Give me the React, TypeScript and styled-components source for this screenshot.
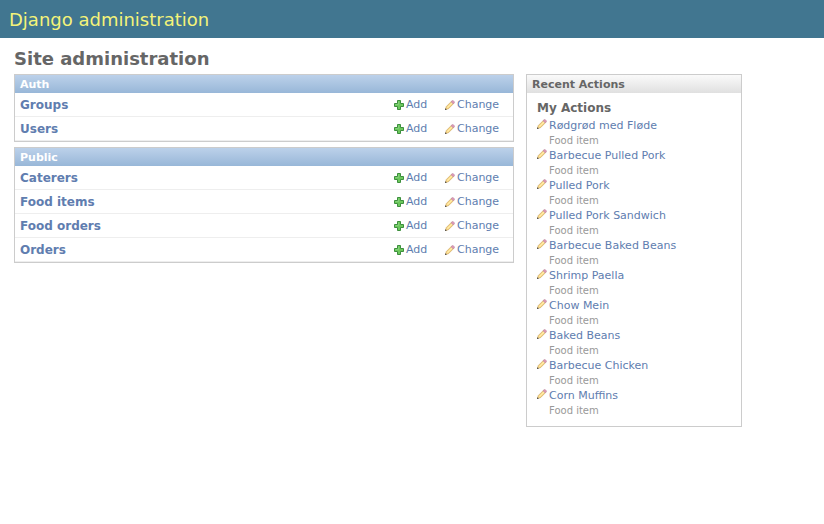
import React from "react";
import styled, { createGlobalStyle } from "styled-components";

const GlobalStyle = createGlobalStyle`
  * { box-sizing: border-box; }
  body {
    margin: 0;
    background: #fff;
    color: #666;
    font: 12px/16px Verdana, "DejaVu Sans", sans-serif;
  }
`;

const Header = styled.header`
  display: flex;
  align-items: center;
  min-height: 38px;
  padding: 2px 9px 0;
  background: #417690;
`;

const SiteName = styled.h1`
  margin: 0;
  color: #f4f379;
  font-size: 18px;
  line-height: 22px;
  font-weight: normal;
`;

const Content = styled.main`
  max-width: 756px;
  padding: 10px 14px;
`;

const PageTitle = styled.h2`
  margin: 0 0 4px;
  font-size: 18px;
  line-height: 22px;
  font-weight: bold;
`;

const Columns = styled.div`
  display: grid;
  grid-template-columns: minmax(0, 1fr) 216px;
  align-items: start;
  gap: 12px;
`;

const ModuleList = styled.div`
  display: flex;
  flex-direction: column;
  gap: 5px;
`;

const ModuleTable = styled.table`
  width: 100%;
  border: 1px solid #ccc;
  border-spacing: 0;
`;

const ModuleHead = styled.th`
  height: 18px;
  padding: 2px 5px 0;
  background: linear-gradient(#bcd1ea, #98b7d8);
  color: #fff;
  font-size: 11px;
  line-height: 16px;
  text-align: left;
`;

const Row = styled.tr`
  & > * {
    height: 24px;
    padding: 0 5px;
    border-bottom: 1px solid #eee;
  }
`;

const ModelName = styled.th`
  font-size: 12px;
  text-align: left;
`;

const ActionCell = styled.td<{ $width: number }>`
  width: ${(p) => p.$width}px;
`;

const Link = styled.a`
  color: #607daf;
  text-decoration: none;
`;

const ActionLink = styled(Link)`
  display: flex;
  align-items: center;
  gap: 2px;
  font-size: 11px;
  line-height: 18px;
`;

const Icon = styled.svg`
  display: block;
  flex: none;
  width: 10px;
  height: 10px;
`;

const Sidebar = styled.aside`
  border: 1px solid #ccc;
`;

const SidebarTitle = styled.h2`
  margin: 0;
  padding: 2px 5px 0;
  background: linear-gradient(#fafafa, #e0e0e0);
  font-size: 11px;
  line-height: 16px;
`;

const SidebarBody = styled.div`
  padding: 7px 10px 9px;
`;

const SidebarSubtitle = styled.h3`
  margin: 0 0 1px;
  font-size: 12px;
  line-height: 16px;
`;

const ActionList = styled.ul`
  margin: 0;
  padding: 0;
  list-style: none;
`;

const ActionItem = styled.li`
  display: grid;
  grid-template-columns: 10px 1fr;
  column-gap: 2px;
  font-size: 11px;
  line-height: 18px;
`;

const IconSlot = styled.span`
  padding-top: 2px;
`;

const Kind = styled.span`
  grid-column: 2;
  color: #999;
  font-size: 10px;
  line-height: 12px;
`;

function PlusIcon() {
  return (
    <Icon viewBox="0 0 10 10" aria-hidden="true">
      <path
        d="M3.5 .5h3v3h3v3h-3v3h-3v-3h-3v-3h3z"
        fill="#6cc85c"
        stroke="#3d8f3d"
      />
      <path d="M4.5 1.5v3h-3" fill="none" stroke="#84d078" />
    </Icon>
  );
}

function PencilIcon() {
  return (
    <Icon viewBox="0 0 10 10" aria-hidden="true">
      <path d="M.5 9.5l.8-3L6.8 1l2.2 2.2-5.5 5.5z" fill="#fbdc8c" stroke="#c49a54" strokeWidth=".6" />
      <path d="M2.4 7.6L7.6 2.4" stroke="#fff0b8" strokeWidth=".8" />
      <path d="M6 1.8L7.8.2 9.8 2.2 8.2 4z" fill="#dc96b4" stroke="#b98aa5" strokeWidth=".5" />
      <path d="M0 10l.4-1.8L1.8 9.6z" fill="#333" />
    </Icon>
  );
}

const modules = [
  { name: "Auth", models: ["Groups", "Users"] },
  { name: "Public", models: ["Caterers", "Food items", "Food orders", "Orders"] },
];

const recent = [
  "Rødgrød med Fløde",
  "Barbecue Pulled Pork",
  "Pulled Pork",
  "Pulled Pork Sandwich",
  "Barbecue Baked Beans",
  "Shrimp Paella",
  "Chow Mein",
  "Baked Beans",
  "Barbecue Chicken",
  "Corn Muffins",
];

export default function App() {
  return (
    <>
      <GlobalStyle />
      <Header>
        <SiteName>Django administration</SiteName>
      </Header>
      <Content>
        <PageTitle>Site administration</PageTitle>
        <Columns>
          <ModuleList>
            {modules.map((module) => (
              <ModuleTable key={module.name}>
                <thead>
                  <tr>
                    <ModuleHead colSpan={3}>{module.name}</ModuleHead>
                  </tr>
                </thead>
                <tbody>
                  {module.models.map((model) => (
                    <Row key={model}>
                      <ModelName scope="row">
                        <Link href="#">{model}</Link>
                      </ModelName>
                      <ActionCell $width={51}>
                        <ActionLink href="#">
                          <PlusIcon />
                          Add
                        </ActionLink>
                      </ActionCell>
                      <ActionCell $width={73}>
                        <ActionLink href="#">
                          <PencilIcon />
                          Change
                        </ActionLink>
                      </ActionCell>
                    </Row>
                  ))}
                </tbody>
              </ModuleTable>
            ))}
          </ModuleList>
          <Sidebar>
            <SidebarTitle>Recent Actions</SidebarTitle>
            <SidebarBody>
              <SidebarSubtitle>My Actions</SidebarSubtitle>
              <ActionList>
                {recent.map((item) => (
                  <ActionItem key={item}>
                    <IconSlot>
                      <PencilIcon />
                    </IconSlot>
                    <Link href="#">{item}</Link>
                    <Kind>Food item</Kind>
                  </ActionItem>
                ))}
              </ActionList>
            </SidebarBody>
          </Sidebar>
        </Columns>
      </Content>
    </>
  );
}
